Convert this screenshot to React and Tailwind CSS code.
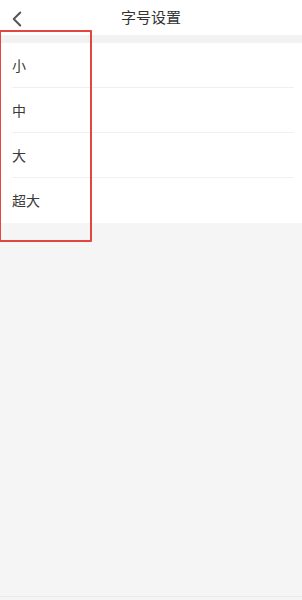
import { ChevronLeft } from 'lucide-react';

const sizes = ['小', '中', '大', '超大'];

export default function App() {
  return (
    <div
      className="relative w-[302px] h-[600px] bg-[#f5f5f5] overflow-hidden"
      style={{ fontFamily: '"Noto Sans CJK SC", "Noto Sans", sans-serif' }}
    >
      {/* Header */}
      <div className="relative h-[35px] bg-white flex items-center justify-center">
        <ChevronLeft className="absolute left-[4px] top-[6px] w-[26px] h-[26px] text-[#555]" strokeWidth={1.8} />
        <span className="text-[15px] text-[#333]">字号设置</span>
      </div>
      <div className="h-[8px] bg-[#f2f2f2]" />

      {/* Options */}
      <div className="bg-white">
        {sizes.map((s, i) => (
          <div key={s} className="pl-[12px] pr-[8px]">
            <div
              className={`h-[45px] flex items-center text-[14px] text-[#3a3a3a] ${
                i < sizes.length - 1 ? 'border-b border-[#f0f0f0]' : ''
              }`}
            >
              {s}
            </div>
          </div>
        ))}
      </div>

      {/* Annotation box */}
      <div className="absolute left-[-1px] top-[30px] w-[93px] h-[212px] border-2 border-[#e2463f] rounded-[1px] pointer-events-none" />
      <div className="absolute left-0 right-0 bottom-[3px] h-px bg-[#ebebeb]" />
    </div>
  );
}
